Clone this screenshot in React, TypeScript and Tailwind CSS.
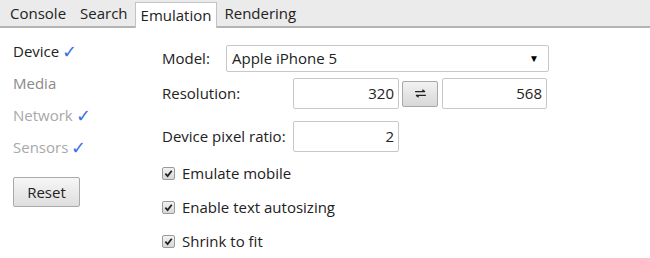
import { useState } from "react";

const tabs = ["Console", "Search", "Emulation", "Rendering"];

const sideItems = [
    { label: "Device", checked: true, tone: "text-[#222]" },
    { label: "Media", checked: false, tone: "text-[#8a8a8a]" },
    { label: "Network", checked: true, tone: "text-[#a8a8a8]" },
    { label: "Sensors", checked: true, tone: "text-[#a8a8a8]" },
];

const Check = ({ label }: { label: string }) => (
    <label className="flex items-center h-[34px] gap-[7px]">
        <span className="w-[13px] h-[13px] rounded-[2px] border border-[#9a9a9a] bg-gradient-to-b from-[#f2f2f2] to-[#d8d8d8] flex items-center justify-center">
            <svg viewBox="0 0 10 10" className="w-[9px] h-[9px]">
                <path d="M1.5 5.2 L4 7.8 L8.6 2" fill="none" stroke="#222" strokeWidth="2" />
            </svg>
        </span>
        <span>{label}</span>
    </label>
);

const Box = ({ value, className }: { value: string; className: string }) => (
    <div className={`h-[31px] border border-[#c8c8c8] rounded-[2px] bg-white flex items-center justify-end pr-[4px] ${className}`}>
        {value}
    </div>
);

export default function App() {
    const [active] = useState("Emulation");
    return (
        <div className="w-[650px] h-[258px] bg-white text-[#222] text-[15px] font-['Open_Sans',sans-serif] overflow-hidden flex flex-col">
            <div className="h-[28px] bg-[#ebebeb] border-b-2 border-[#b4b4b4] flex items-end pl-[3px]">
                {tabs.map((t) => (
                    <div
                        key={t}
                        className={
                            t === active
                                ? "h-[26px] px-[5px] bg-white border border-b-0 border-[#c4c4c4] flex items-center -mb-[2px]"
                                : "h-[26px] px-[7px] flex items-center"
                        }
                    >
                        {t}
                    </div>
                ))}
            </div>
            <div className="flex flex-1 border-b-[3px] border-[#c9c9c9]">
                <div className="w-[150px] pl-[13px] pt-[7px]">
                    {sideItems.map((s) => (
                        <div key={s.label} className={`h-[32px] flex items-center ${s.tone}`}>
                            {s.label}
                            {s.checked && <span className="text-[#3d6fe6] text-[18px] ml-[3px]">✓</span>}
                        </div>
                    ))}
                    <button className="mt-[14px] w-[67px] h-[30px] border border-[#aaa] rounded-[2px] bg-gradient-to-b from-[#f6f6f6] to-[#dedede] text-[#222]">
                        Reset
                    </button>
                </div>
                <div className="pl-[12px] pt-[17px]">
                    <div className="flex items-center h-[27px]">
                        <span className="w-[64px]">Model:</span>
                        <div className="w-[323px] h-[27px] border border-[#c8c8c8] rounded-[2px] flex items-center justify-between pl-[5px] pr-[9px]">
                            <span>Apple iPhone 5</span>
                            <span className="text-[10px] text-black">▼</span>
                        </div>
                    </div>
                    <div className="flex items-center mt-[6px]">
                        <span className="w-[131px]">Resolution:</span>
                        <Box value="320" className="w-[106px]" />
                        <button className="ml-[3px] w-[36px] h-[26px] border border-[#a8a8a8] rounded-[2px] bg-gradient-to-b from-[#f2f2f2] to-[#d8d8d8] flex items-center justify-center">
                            <svg viewBox="0 0 14 10" className="w-[13px] h-[9px]">
                                <path d="M1 3 H12 M9 0.8 L12 3 M13 7 H2 M5 9.2 L2 7" fill="none" stroke="#222" strokeWidth="1.4" />
                            </svg>
                        </button>
                        <Box value="568" className="ml-[4px] w-[105px]" />
                    </div>
                    <div className="flex items-center mt-[12px]">
                        <span className="w-[131px]">Device pixel ratio:</span>
                        <Box value="2" className="w-[106px] h-[30px]" />
                    </div>
                    <div className="mt-[4px]">
                        <Check label="Emulate mobile" />
                        <Check label="Enable text autosizing" />
                        <Check label="Shrink to fit" />
                    </div>
                </div>
            </div>
        </div>
    );
}
